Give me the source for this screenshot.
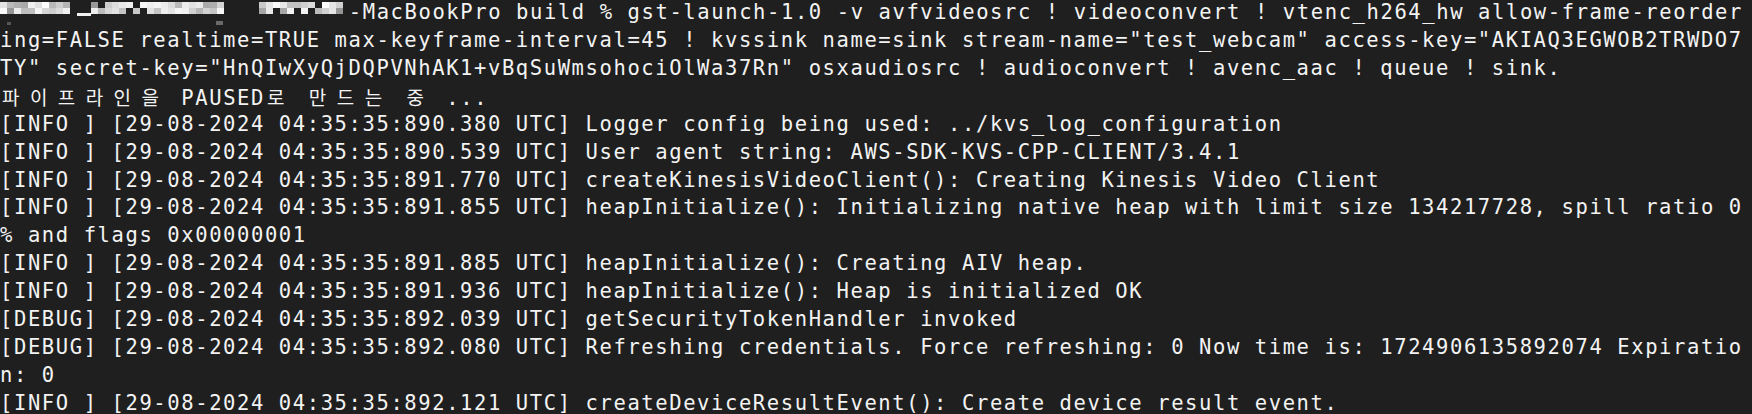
import React from "react";

function Mosaic() {
  const rects = [];
  let seed = 11;
  const rnd = () => {
    seed = (seed * 9301 + 49297) % 233280;
    return seed / 233280;
  };
  for (let c = 0; c < 50; c++) {
    const x = c * 7;
    if (x >= 224 && x < 259) continue;
    if (x >= 70 && x < 91) {
      if (x >= 77 && x < 88) {
        rects.push(<rect key={`u${c}`} x={x} y={14} width={7} height={3} fill="#f0f0f0" />);
      }
      continue;
    }
    if (x >= 343) continue;
    for (let r = 0; r < 2; r++) {
      const v = rnd();
      if (v < 0.1) continue;
      const g = Math.round(90 + Math.pow(v, 0.45) * 165);
      rects.push(
        <rect key={`${c}-${r}`} x={x} y={3 + r * 6} width={7} height={6} fill={`rgb(${g},${g},${g})`} />
      );
    }
  }
  rects.push(<rect key="s1" x={7} y={23} width={4} height={3} fill="#555" />);
  rects.push(<rect key="s2" x={216} y={22} width={7} height={4} fill="#6a6a6a" />);
  return (
    <span className="relative inline-block h-[27.93px] w-[348.75px] align-top">
      <svg className="absolute left-0 top-0 overflow-visible" width="349" height="28" viewBox="0 0 349 28">
        {rects}
      </svg>
    </span>
  );
}

function KoreanLine() {
  const text = "파이프라인을 PAUSED로 만드는 중 ...";
  return (
    <>
      {Array.from(text).map((ch, i) =>
        /[\uAC00-\uD7A3]/.test(ch) ? (
          <span
            key={i}
            className="inline-block w-[27.9px] pl-[2px] tracking-normal text-[19px] [font-family:'Noto_Sans_CJK_KR','Noto_Sans_CJK_SC',sans-serif]"
          >
            {ch}
          </span>
        ) : (
          <span key={i}>{ch}</span>
        )
      )}
    </>
  );
}

const lines = [
  'ing=FALSE realtime=TRUE max-keyframe-interval=45 ! kvssink name=sink stream-name="test_webcam" access-key="AKIAQ3EGWOB2TRWDO7',
  'TY" secret-key="HnQIwXyQjDQPVNhAK1+vBqSuWmsohociOlWa37Rn" osxaudiosrc ! audioconvert ! avenc_aac ! queue ! sink.',
  "KOREAN",
  "[INFO ] [29-08-2024 04:35:35:890.380 UTC] Logger config being used: ../kvs_log_configuration",
  "[INFO ] [29-08-2024 04:35:35:890.539 UTC] User agent string: AWS-SDK-KVS-CPP-CLIENT/3.4.1",
  "[INFO ] [29-08-2024 04:35:35:891.770 UTC] createKinesisVideoClient(): Creating Kinesis Video Client",
  "[INFO ] [29-08-2024 04:35:35:891.855 UTC] heapInitialize(): Initializing native heap with limit size 134217728, spill ratio 0",
  "% and flags 0x00000001",
  "[INFO ] [29-08-2024 04:35:35:891.885 UTC] heapInitialize(): Creating AIV heap.",
  "[INFO ] [29-08-2024 04:35:35:891.936 UTC] heapInitialize(): Heap is initialized OK",
  "[DEBUG] [29-08-2024 04:35:35:892.039 UTC] getSecurityTokenHandler invoked",
  "[DEBUG] [29-08-2024 04:35:35:892.080 UTC] Refreshing credentials. Force refreshing: 0 Now time is: 1724906135892074 Expiratio",
  "n: 0",
  "[INFO ] [29-08-2024 04:35:35:892.121 UTC] createDeviceResultEvent(): Create device result event.",
];

export default function App() {
  return (
    <div className="h-[414px] w-[1752px] overflow-hidden bg-[#1f1f1f]">
      <div className="-mt-[1px] text-[20.5px] leading-[27.93px] tracking-[1.6px] text-[#f3f3f3] [font-family:'DejaVu_Sans_Mono','Liberation_Mono',monospace]">
        <div className="h-[27.93px] whitespace-pre">
          <Mosaic />
          <span>-MacBookPro build % gst-launch-1.0 -v avfvideosrc ! videoconvert ! vtenc_h264_hw allow-frame-reorder</span>
        </div>
        {lines.map((l, i) => (
          <div key={i} className="h-[27.93px] whitespace-pre">
            {l === "KOREAN" ? <KoreanLine /> : l}
          </div>
        ))}
      </div>
    </div>
  );
}
